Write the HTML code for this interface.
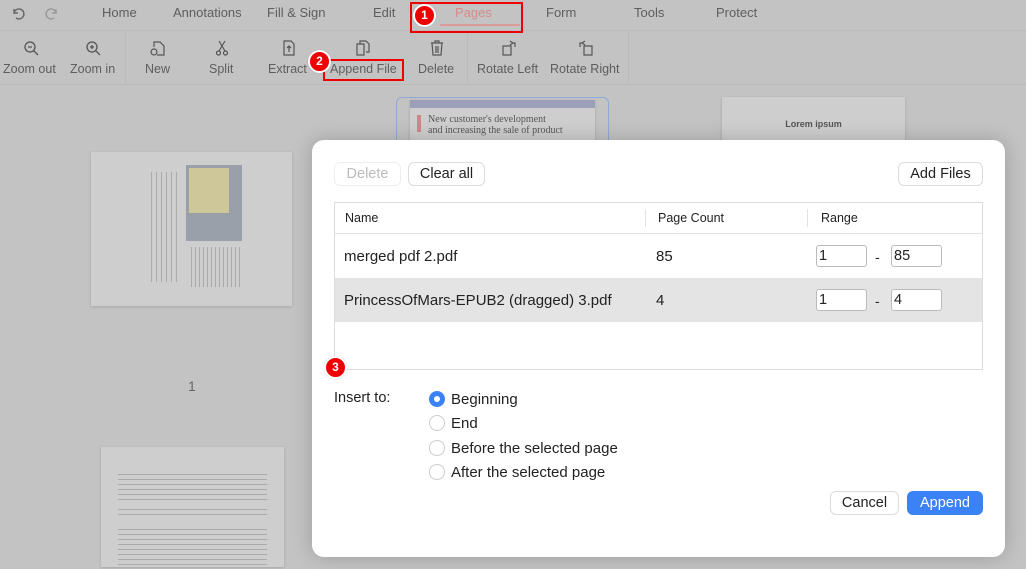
<!DOCTYPE html>
<html><head><meta charset="utf-8"><style>
*{box-sizing:border-box;margin:0;padding:0}
body{width:1026px;height:562px;overflow:hidden;background:#c3c3c3;font-family:"Liberation Sans",sans-serif;position:relative;color:#222}
.abs{position:absolute}
.tab{position:absolute;top:5px;font-size:13px;color:#5e5e5e}
.tb{position:absolute;top:62px;font-size:12.5px;color:#5e5e5e}
.ic{position:absolute;top:40px}
.page{position:absolute;background:#cecece;box-shadow:0 1px 3px rgba(0,0,0,.15)}
.btn{position:absolute;background:#fff;border:1px solid #dcdcdc;border-radius:6px;font-size:14.5px;color:#222;text-align:center;line-height:23px;height:24px}
.cell{position:absolute;font-size:14px}
.inp{position:absolute;width:51px;height:22px;border:1px solid #bbb;border-radius:3px;background:#fff;font-size:14.5px;padding-left:2px;line-height:20px}
.radio{position:absolute;left:429px;width:16px;height:16px;border-radius:50%;border:1px solid #ccc;background:#fff}
.rl{position:absolute;left:451px;font-size:15px;color:#222}
.badge{position:absolute;width:23px;height:23px;border-radius:50%;background:#e00;border:2px solid #fff;color:#fff;font-size:12px;font-weight:bold;text-align:center;line-height:19px;box-shadow:0 0 1px rgba(0,0,0,.3)}
</style></head><body>
<div class="abs" style="left:0;top:30px;width:1026px;height:1px;background:#bababa"></div>
<div class="abs" style="left:0;top:84px;width:1026px;height:1px;background:#bababa"></div>
<div class="abs" style="left:125px;top:31px;width:1px;height:53px;background:#bababa"></div>
<div class="abs" style="left:467px;top:31px;width:1px;height:53px;background:#bababa"></div>
<div class="abs" style="left:628px;top:31px;width:1px;height:53px;background:#bababa"></div>
<svg class="abs" style="left:10px;top:4px" width="50" height="18" viewBox="0 0 50 18" fill="none" stroke="#666" stroke-width="1.4"><path d="M4 5v4h4M4 9a5 5 0 1 1 2 5"/><path d="M46 5v4h-4M46 9a5 5 0 1 0 -2 5" stroke="#999"/></svg>
<div class="tab" style="left:102px">Home</div>
<div class="tab" style="left:173px">Annotations</div>
<div class="tab" style="left:267px">Fill &amp; Sign</div>
<div class="tab" style="left:373px">Edit</div>
<div class="tab" style="left:455px;color:#d98a8a">Pages</div>
<div class="abs" style="left:440px;top:24px;width:80px;height:2px;background:#d99;border-radius:1px"></div>
<div class="tab" style="left:546px">Form</div>
<div class="tab" style="left:634px">Tools</div>
<div class="tab" style="left:716px">Protect</div>
<div class="abs" style="left:410px;top:2px;width:113px;height:31px;border:2px solid #e00"></div>
<div class="badge" style="left:413px;top:4px">1</div>
<svg class="ic" style="left:23px" width="16" height="16" fill="none" stroke="#555" stroke-width="1.3"><circle cx="7" cy="7" r="5"/><path d="M11 11l4 4M5 7h4"/></svg>
<svg class="ic" style="left:85px" width="16" height="16" fill="none" stroke="#555" stroke-width="1.3"><circle cx="7" cy="7" r="5"/><path d="M11 11l4 4M5 7h4M7 5v4"/></svg>
<svg class="ic" style="left:150px" width="16" height="16" fill="none" stroke="#555" stroke-width="1.2"><path d="M4 7V2h6l4 4v9H7"/><circle cx="4" cy="12" r="3"/></svg>
<svg class="ic" style="left:214px" width="16" height="16" fill="none" stroke="#555" stroke-width="1.2"><path d="M5 1l6 10M11 1L5 11"/><circle cx="4.5" cy="13" r="2"/><circle cx="11.5" cy="13" r="2"/></svg>
<svg class="ic" style="left:281px" width="16" height="16" fill="none" stroke="#555" stroke-width="1.2"><path d="M3 1h7l3 3v11H3z M8 12V6M6 8l2-2 2 2"/></svg>
<svg class="ic" style="left:355px" width="16" height="16" fill="none" stroke="#555" stroke-width="1.2"><path d="M5 4V1h6l3 3v8h-3M2 4h7v11H2z"/></svg>
<svg class="ic" style="left:429px" width="16" height="16" fill="none" stroke="#555" stroke-width="1.2"><path d="M2 3h12M6 3V1h4v2M3 3l1 12h8l1-12M7 6v7M9 6v7"/></svg>
<svg class="ic" style="left:501px" width="16" height="16" fill="none" stroke="#555" stroke-width="1.2"><path d="M2 6h8v9H2zM9 1l3 2-3 2M12 3h2v4"/></svg>
<svg class="ic" style="left:578px" width="16" height="16" fill="none" stroke="#555" stroke-width="1.2"><path d="M6 6h8v9H6zM7 1L4 3l3 2M4 3H2v4"/></svg>
<div class="tb" style="left:3px">Zoom out</div>
<div class="tb" style="left:70px">Zoom in</div>
<div class="tb" style="left:145px">New</div>
<div class="tb" style="left:209px">Split</div>
<div class="tb" style="left:268px">Extract</div>
<div class="tb" style="left:330px">Append File</div>
<div class="tb" style="left:418px">Delete</div>
<div class="tb" style="left:477px">Rotate Left</div>
<div class="tb" style="left:550px">Rotate Right</div>
<div class="abs" style="left:323px;top:59px;width:81px;height:22px;border:2px solid #e00"></div>
<div class="badge" style="left:308px;top:50px">2</div>
<div class="page" style="left:91px;top:152px;width:201px;height:154px"><div class="abs" style="left:95px;top:13px;width:56px;height:76px;background:#9aa0aa"></div><div class="abs" style="left:98px;top:16px;width:40px;height:45px;background:#cdc79a"></div><div class="abs" style="left:60px;top:20px;width:30px;height:110px;background:repeating-linear-gradient(90deg,#aaa 0 1px,transparent 1px 5px)"></div><div class="abs" style="left:100px;top:95px;width:50px;height:40px;background:repeating-linear-gradient(90deg,#aaa 0 1px,transparent 1px 4px)"></div></div>
<div class="abs" style="left:188px;top:378px;font-size:14px;color:#666">1</div>
<div class="abs" style="left:396px;top:97px;width:213px;height:60px;border:1px solid #8fa9d6;border-radius:6px"></div>
<div class="page" style="left:410px;top:100px;width:185px;height:50px"><div class="abs" style="left:0;top:0;width:185px;height:8px;background:#9c9fb8"></div><div class="abs" style="left:7px;top:15px;width:4px;height:17px;background:#c88"></div><div class="abs" style="left:18px;top:14px;font-family:'Liberation Serif',serif;font-size:10px;color:#555;line-height:11px">New customer's development<br>and increasing the sale of product</div></div>
<div class="page" style="left:722px;top:97px;width:183px;height:50px"><div class="abs" style="left:0;top:22px;width:183px;text-align:center;font-size:9px;font-weight:bold;color:#555">Lorem ipsum</div></div>
<div class="page" style="left:101px;top:447px;width:183px;height:120px"><div class="abs" style="left:17px;top:27px;width:149px;height:30px;background:repeating-linear-gradient(#aaa 0 1px,transparent 1px 5px)"></div><div class="abs" style="left:17px;top:62px;width:149px;height:10px;background:repeating-linear-gradient(#aaa 0 1px,transparent 1px 5px)"></div><div class="abs" style="left:17px;top:82px;width:149px;height:40px;background:repeating-linear-gradient(#aaa 0 1px,transparent 1px 5px)"></div></div>
<div class="abs" style="left:312px;top:140px;width:693px;height:417px;background:#fff;border-radius:12px;box-shadow:0 0 20px rgba(0,0,0,.2)"></div>
<div class="btn" style="left:334px;top:162px;width:67px;color:#bbb;border-color:#eee">Delete</div>
<div class="btn" style="left:408px;top:162px;width:77px">Clear all</div>
<div class="btn" style="left:898px;top:162px;width:85px">Add Files</div>
<div class="abs" style="left:334px;top:202px;width:649px;height:168px;border:1px solid #dcdcdc"></div>
<div class="abs" style="left:335px;top:233px;width:647px;height:1px;background:#e2e2e2"></div>
<div class="abs" style="left:645px;top:209px;width:1px;height:18px;background:#e2e2e2"></div>
<div class="abs" style="left:807px;top:209px;width:1px;height:18px;background:#e2e2e2"></div>
<div class="cell" style="left:345px;top:211px;font-size:12.5px">Name</div>
<div class="cell" style="left:658px;top:211px;font-size:12.5px">Page Count</div>
<div class="cell" style="left:821px;top:211px;font-size:12.5px">Range</div>
<div class="abs" style="left:335px;top:278px;width:647px;height:44px;background:#e4e4e4"></div>
<div class="cell" style="left:344px;top:248px;font-size:15px">merged pdf 2.pdf</div>
<div class="cell" style="left:656px;top:248px;font-size:15px">85</div>
<div class="inp" style="left:816px;top:245px">1</div><div class="cell" style="left:875px;top:249px">-</div><div class="inp" style="left:891px;top:245px">85</div>
<div class="cell" style="left:344px;top:292px;font-size:15px">PrincessOfMars-EPUB2 (dragged) 3.pdf</div>
<div class="cell" style="left:656px;top:292px;font-size:15px">4</div>
<div class="inp" style="left:816px;top:289px">1</div><div class="cell" style="left:875px;top:293px">-</div><div class="inp" style="left:891px;top:289px">4</div>
<div class="badge" style="left:324px;top:356px">3</div>
<div class="abs" style="left:334px;top:390px;font-size:14.5px">Insert to:</div>
<div class="radio" style="top:391px;background:#3b82f6;border-color:#3b82f6"><div class="abs" style="left:4px;top:4px;width:6px;height:6px;border-radius:50%;background:#fff"></div></div>
<div class="rl" style="top:391px">Beginning</div>
<div class="radio" style="top:415px"></div><div class="rl" style="top:415px">End</div>
<div class="radio" style="top:440px"></div><div class="rl" style="top:440px">Before the selected page</div>
<div class="radio" style="top:464px"></div><div class="rl" style="top:464px">After the selected page</div>
<div class="btn" style="left:830px;top:491px;width:69px">Cancel</div>
<div class="btn" style="left:907px;top:491px;width:76px;background:#3b82f6;border-color:#3b82f6;color:#fff">Append</div>
</body></html>
